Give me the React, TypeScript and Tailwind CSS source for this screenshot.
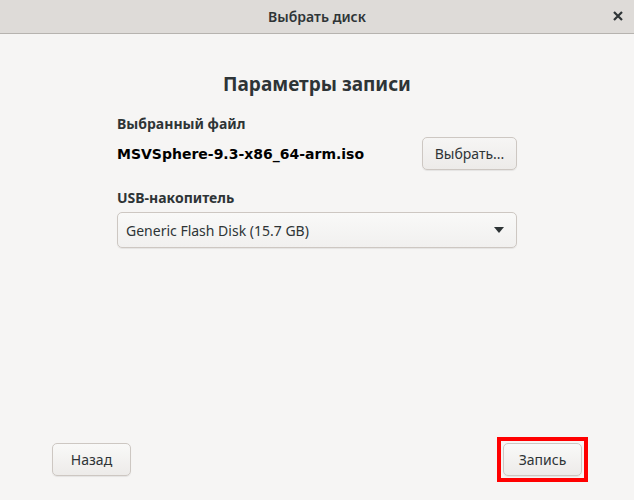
export default function App() {
  return (
    <div
      className="w-[634px] h-[500px] flex flex-col bg-[#f6f5f4] text-[#2e3436] overflow-hidden"
      style={{ fontFamily: '"Noto Sans", "Open Sans", sans-serif' }}
    >
      {/* title bar */}
      <div className="h-[34px] shrink-0 relative flex items-center justify-center bg-[#dedbd8] border-b border-[#b6b3af]">
        <span className="text-[14px] font-semibold text-[#2e3436]">Выбрать диск</span>
        <button className="absolute right-[8px] top-[8px] w-[16px] h-[16px] flex items-center justify-center">
          <svg width="10" height="10" viewBox="0 0 10 10">
            <path d="M1 1 L9 9 M9 1 L1 9" stroke="#2e3436" strokeWidth="2.2" />
          </svg>
        </button>
      </div>

      {/* content */}
      <div className="flex-1 flex flex-col">
        <div className="w-[400px] mx-auto pt-[36px] flex flex-col">
          <h1 className="text-center text-[19px] font-bold leading-[28px]">Параметры записи</h1>

          <div className="mt-[16px] text-[14px] font-bold leading-[20px]">Выбранный файл</div>
          <div className="mt-[3px] flex items-center justify-between">
            <span
              className="text-[14px] font-bold leading-[20px] text-black"
              style={{ fontFamily: '"DejaVu Sans", sans-serif' }}
            >
              MSVSphere-9.3-x86_64-arm.iso
            </span>
            <button className="w-[95px] h-[33px] rounded-[5px] border border-[#cdc7c2] bg-gradient-to-b from-[#f6f5f4] to-[#edebe9] text-[14px] shadow-[0_1px_1px_rgba(0,0,0,0.07)]">
              Выбрать...
            </button>
          </div>

          <div className="mt-[18px] text-[14px] font-bold leading-[20px]">USB-накопитель</div>
          <div className="mt-[4px] h-[36px] rounded-[5px] border border-[#cdc7c2] bg-gradient-to-b from-[#f9f9f8] to-[#f1f0ef] flex items-center justify-between pl-[8px] pr-[12px] shadow-[0_1px_1px_rgba(0,0,0,0.07)]">
            <span className="text-[14px]">Generic Flash Disk (15.7 GB)</span>
            <svg width="10" height="6" viewBox="0 0 10 6">
              <path d="M0 0 H10 L5 6 Z" fill="#2e3436" />
            </svg>
          </div>
        </div>

        <div className="mt-auto mb-[18px] flex items-center justify-between pl-[52px] pr-[46px]">
          <button className="w-[79px] h-[33px] rounded-[5px] border border-[#cdc7c2] bg-gradient-to-b from-[#f9f9f8] to-[#edebe9] text-[14px] shadow-[0_1px_1px_rgba(0,0,0,0.07)]">
            Назад
          </button>
          <div className="border-[4px] border-[#ff0000] p-[2px]">
            <button className="w-[79px] h-[33px] rounded-[5px] border border-[#cdc7c2] bg-gradient-to-b from-[#f9f9f8] to-[#edebe9] text-[14px] shadow-[0_1px_1px_rgba(0,0,0,0.07)] block">
              Запись
            </button>
          </div>
        </div>
      </div>
    </div>
  );
}
